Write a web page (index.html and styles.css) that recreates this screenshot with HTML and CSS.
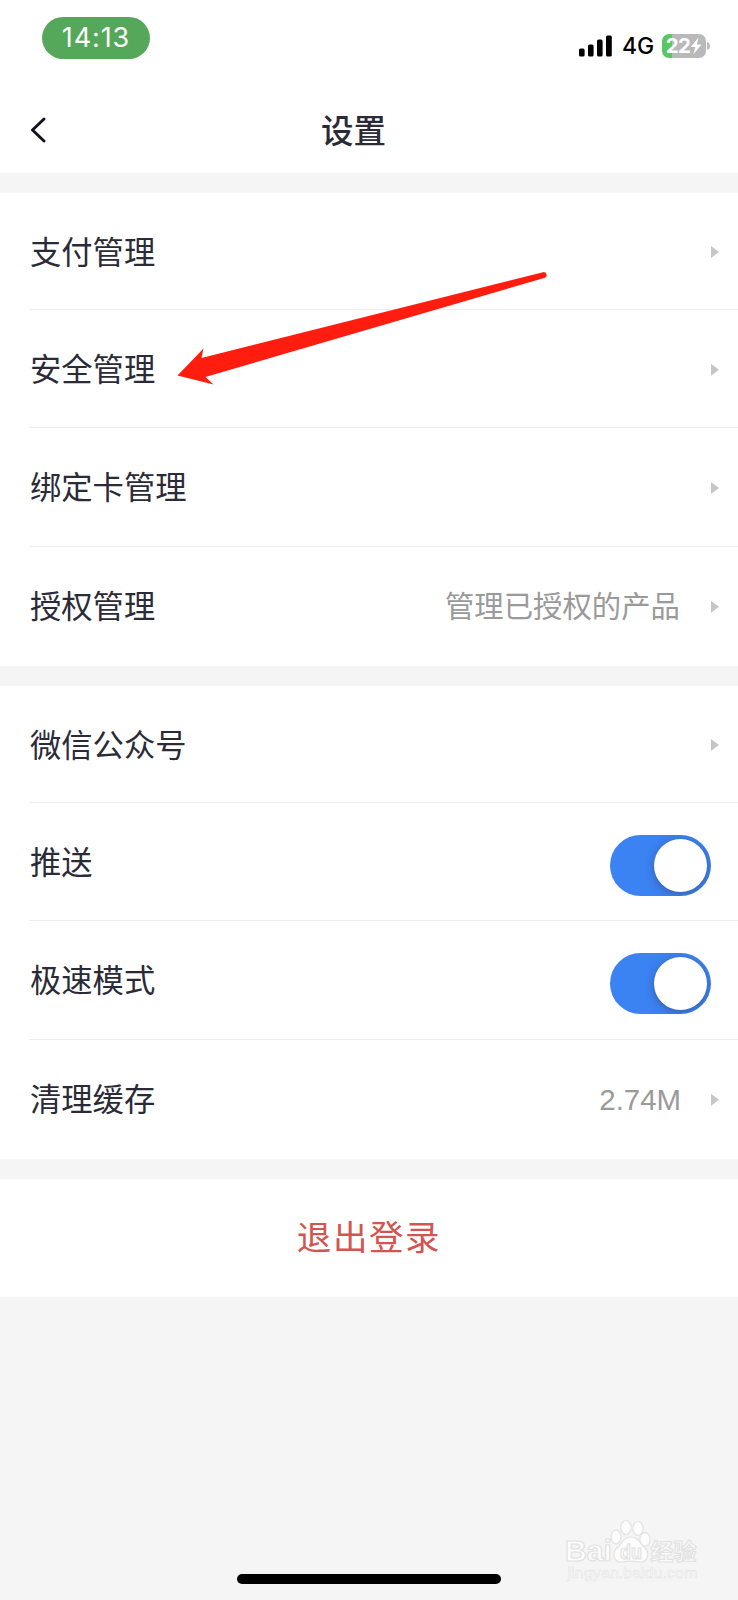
FILE: index.html
```html
<!DOCTYPE html>
<html lang="zh-CN">
<head>
<meta charset="utf-8">
<title>设置</title>
<link rel="stylesheet" href="styles.css">
</head>
<body>
<div class="screen">
  <header class="header">
    <div class="status">
      <span class="time">14:13</span>
      <div class="indicators">
        <svg class="signal" width="34" height="22" viewBox="0 0 34 22"><rect x="0" y="13.5" width="5.6" height="8" rx="1.6"/><rect x="9" y="9.5" width="5.6" height="12" rx="1.6"/><rect x="18" y="4.5" width="5.6" height="17" rx="1.6"/><rect x="27" y="0.5" width="5.8" height="21" rx="1.6"/></svg>
        <span class="network">4G</span>
        <div class="battery">
          <div class="cell"><span class="level">22</span><svg width="12" height="18" viewBox="0 0 12 18"><path d="M8.6 0.5L0.6 10H5.3L3.2 17.5L11.6 7.4H6.8Z" fill="#fff"/></svg></div>
          <svg class="tip" width="4" height="10" viewBox="0 0 4 10"><path d="M0 1C4 2 4 8 0 9Z" fill="#b9b9b9"/></svg>
        </div>
      </div>
    </div>
    <nav class="nav">
      <svg class="back" width="18" height="26" viewBox="0 0 18 26"><path d="M14 2L2.5 13L14 24" fill="none" stroke="#11111d" stroke-width="2.9" stroke-linecap="round" stroke-linejoin="round"/></svg>
      <h1 class="title">设置</h1>
    </nav>
  </header>

  <section class="group">
    <div class="row"><span class="label">支付管理</span><i class="caret"></i></div>
    <div class="row"><span class="label">安全管理</span><i class="caret"></i></div>
    <div class="row"><span class="label">绑定卡管理</span><i class="caret"></i></div>
    <div class="row"><span class="label">授权管理</span><span class="value">管理已授权的产品</span><i class="caret"></i></div>
  </section>

  <section class="group">
    <div class="row"><span class="label">微信公众号</span><i class="caret"></i></div>
    <div class="row"><span class="label">推送</span><span class="switch"><span class="knob"></span></span></div>
    <div class="row"><span class="label">极速模式</span><span class="switch"><span class="knob"></span></span></div>
    <div class="row"><span class="label">清理缓存</span><span class="value size">2.74M</span><i class="caret"></i></div>
  </section>

  <button class="logout">退出登录</button>

  <svg class="pointer" width="372" height="116" viewBox="0 0 372 116"><path d="M0.5 109.5L26.5 82.5L24.5 92L366 6.2A3 3 0 0 1 368 11.8L28.5 111L36.5 118.5L0.5 109.5Z" fill="#ff1d10"/></svg>

  <svg class="watermark" width="140" height="72" viewBox="0 0 140 72">
    <g fill="#fcfcfc" stroke="#e2e2e2" stroke-width="1.2">
      <text class="mark" x="2" y="45" font-size="29" textLength="47" lengthAdjust="spacingAndGlyphs">Bai</text>
      <ellipse cx="53" cy="21" rx="5" ry="6.8"/><ellipse cx="63" cy="11.5" rx="5.2" ry="7"/><ellipse cx="75" cy="12.5" rx="5.2" ry="7"/><ellipse cx="82" cy="23.5" rx="5.2" ry="6.8"/>
      <path d="M68 21C60 21 59 28 54 32C48 37 51 47 59 46C64 45 71 45 76 46C85 47 87 37 82 32C77 28 76 21 68 21Z"/>
      <text class="mark" x="57" y="43" font-size="20" textLength="22" lengthAdjust="spacingAndGlyphs">du</text>
      <text class="mark" x="87.500" y="43.500" font-size="23" textLength="46" lengthAdjust="spacingAndGlyphs">经验</text>
      <text class="site" x="4.500" y="62" font-size="15.5" textLength="130" lengthAdjust="spacingAndGlyphs">jingyan.baidu.com</text>
    </g>
  </svg>
  <div class="home-bar"></div>
</div>
</body>
</html>
```
FILE: styles.css
```css
* { box-sizing: border-box; }

body {
  margin: 0;
  background: #f5f5f5;
  font-family: "Liberation Sans", "Noto Sans CJK SC", sans-serif;
  color: #2b2b38;
}

.screen {
  position: relative;
  width: 738px;
  height: 1600px;
  overflow: hidden;
  background: #f5f5f5;
}

.header {
  height: 173px;
  margin-bottom: 20px;
  background: #fff;
}

.status {
  display: flex;
  justify-content: space-between;
  align-items: flex-start;
  height: 87px;
  padding: 17px 27px 0 42px;
}

.time {
  width: 108px;
  height: 42px;
  border-radius: 21px;
  background: #55a859;
  color: #fff;
  font: 400 27px/42px Inter, sans-serif;
  letter-spacing: .9px;
  text-align: center;
}

.indicators {
  display: flex;
  align-items: center;
  height: 24px;
  margin-top: 17px;
}

.signal { margin-right: 9px; }

.network {
  width: 40px;
  color: #000;
  font: 500 23px/24px Inter, sans-serif;
}

.battery { display: flex; align-items: center; }

.cell {
  display: flex;
  align-items: center;
  justify-content: center;
  width: 44px;
  height: 24px;
  border-radius: 7px;
  background: linear-gradient(90deg, #5cc663 10px, #b9b9b9 10px);
}

.level {
  color: #fff;
  font: 700 20.5px/24px Inter, sans-serif;
  letter-spacing: -.6px;
}

.tip { margin-left: 1px; }

.nav {
  display: grid;
  grid-template-columns: 291px 1fr;
  align-items: center;
  height: 86px;
  padding-left: 30px;
}

.title {
  margin: 0;
  padding-top: 3px;
  font-size: 32.5px;
  font-weight: 500;
  line-height: 48px;
}

.group {
  height: 473px;
  margin-bottom: 20px;
  padding-left: 29px;
  background: #fff;
}

.row {
  display: flex;
  align-items: center;
  height: 118.3px;
  padding: 2px 19px 0 0;
  border-bottom: 1px solid #eeeeef;
}

.row:first-child { height: 117px; }
.row:last-child { border-bottom: 0; }

.label {
  margin-right: auto;
  padding: 3px 0 0 1px;
  font-size: 31.3px;
  line-height: 46px;
}

.value {
  margin-right: 31px;
  padding-top: 1px;
  color: #9a9a9a;
  font-size: 29.4px;
  line-height: 44px;
}

.size {
  margin-right: 30px;
  padding-top: 0;
}

.caret {
  width: 8px;
  height: 12px;
  background: #c6c6c6;
  clip-path: polygon(0 0, 100% 50%, 0 100%);
}

.switch {
  display: flex;
  justify-content: flex-end;
  width: 101px;
  height: 61px;
  margin: 6px 8px 0 0;
  padding: 4px;
  border-radius: 31px;
  background: #3b82f3;
  overflow: hidden;
}

.knob {
  width: 53px;
  height: 53px;
  border-radius: 50%;
  background: #fff;
  box-shadow: 0 2px 9px rgba(50, 60, 90, .5);
}

.logout {
  display: block;
  width: 738px;
  height: 118px;
  padding: 0 0 5px;
  border: 0;
  background: #fff;
  color: #d4544f;
  font: 400 34.5px/113px "Noto Sans CJK SC", sans-serif;
  letter-spacing: 1.6px;
}

.pointer {
  position: absolute;
  left: 177px;
  top: 266px;
  overflow: visible;
}

.watermark {
  position: absolute;
  left: 563px;
  top: 1516px;
}

.mark {
  font-family: "Liberation Sans", "Noto Sans CJK SC", sans-serif;
  font-weight: 700;
}

.site {
  font-family: "Liberation Sans", sans-serif;
  stroke-width: .5px;
}

.home-bar {
  position: absolute;
  left: 237px;
  bottom: 16px;
  width: 264px;
  height: 10px;
  border-radius: 5px;
  background: #000;
}
```
